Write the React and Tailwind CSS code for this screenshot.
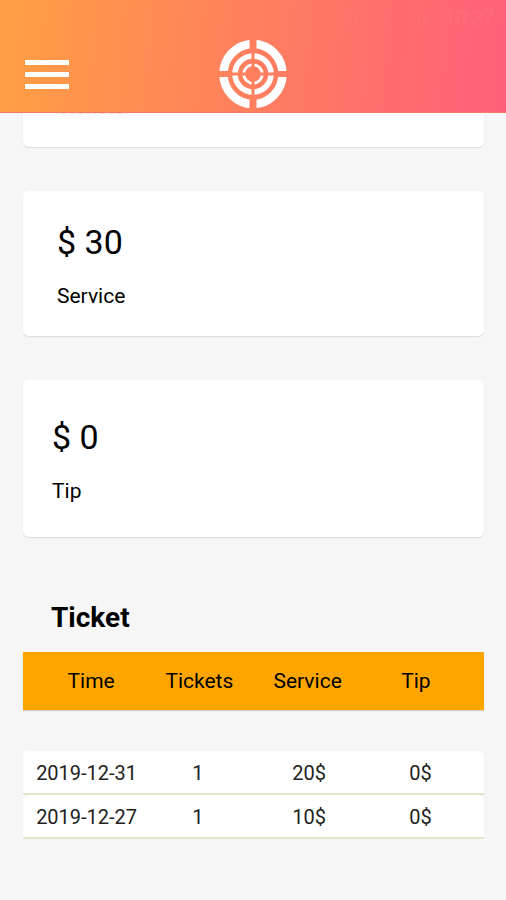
import React from 'react';
import { AlarmClock, Signal, Wifi } from 'lucide-react';

const tickets = [
  { time: '2019-12-31', tickets: 1, service: 20, tip: 0 },
  { time: '2019-12-27', tickets: 1, service: 10, tip: 0 },
];

const columns = ['Time', 'Tickets', 'Service', 'Tip'];

const TargetLogo = () => (
  <svg viewBox="0 0 68 70" className="w-[68px] h-[70px]" fill="none" stroke="#fff" aria-hidden="true">
    <defs>
      <mask id="cross" maskUnits="userSpaceOnUse" x="0" y="0" width="68" height="70">
        <rect width="68" height="70" fill="#fff" stroke="none" />
        <path d="M34 0V13M34 57V70" stroke="#000" strokeWidth="7" />
        <path d="M0 35H12M56 35H68" stroke="#000" strokeWidth="6" />
        <path d="M34 13V57M12 35H56" stroke="#000" strokeWidth="3" />
      </mask>
    </defs>
    <g mask="url(#cross)">
      <ellipse cx="34" cy="35" rx="29.5" ry="30" strokeWidth="8.5" />
      <circle cx="34" cy="35" r="18" strokeWidth="5.5" />
      <circle cx="34" cy="35" r="9.25" strokeWidth="2.75" />
    </g>
  </svg>
);

const StatusBar = () => (
  <div className="flex h-9 items-center justify-end gap-4 px-3 text-[#ff8580] opacity-25">
    <AlarmClock size={18} />
    <Wifi size={18} />
    <Signal size={18} />
    <span className="text-xl">10:27</span>
  </div>
);

const Header = () => (
  <header className="sticky top-0 z-10 h-[113px] border-b border-[#f07a60] bg-[linear-gradient(95deg,#ff9f43,#ff5f7a)]">
    <StatusBar />
    <div className="grid grid-cols-3 items-center px-6 pt-[3px]">
      <button type="button" aria-label="Menu" className="flex w-[46px] flex-col gap-[7px] px-px">
        <span className="h-[5px] bg-white" />
        <span className="h-[5px] bg-white" />
        <span className="h-[5px] bg-white" />
      </button>
      <div className="flex justify-center">
        <TargetLogo />
      </div>
    </div>
  </header>
);

const StatCard = ({ value, label, className = 'pt-[31px] pb-7 px-[34px]', labelColor = 'text-black' }) => (
  <section className={`rounded-md bg-white shadow-[0_1px_1px_#dcdcdc] ${className}`}>
    <p className="text-[34px] leading-10">{value}</p>
    <p className={`mt-[22px] text-[21px] leading-6 ${labelColor}`}>{label}</p>
  </section>
);

const TicketTable = () => (
  <table className="block w-full text-center text-xl leading-6">
    <thead className="block bg-[#ffa500] px-3.5 shadow-[0_1px_1px_#cfcfcf]">
      <tr className="grid grid-cols-4 py-[17px] text-[21px]">
        {columns.map((column) => (
          <th key={column} scope="col" className="font-normal">{column}</th>
        ))}
      </tr>
    </thead>
    <tbody className="mt-[41px] block">
      {tickets.map((row) => (
        <tr key={row.time} className="grid h-11 grid-cols-4 items-center rounded-t-md border-b-2 border-[#e6e6c6] bg-white px-2 pt-0.5 text-[#222]">
          <td className="whitespace-nowrap">{row.time}</td>
          <td>{row.tickets}</td>
          <td>{row.service}$</td>
          <td>{row.tip}$</td>
        </tr>
      ))}
    </tbody>
  </table>
);

const App = () => (
  <div className="min-h-screen bg-[#f6f6f6] font-[Roboto,sans-serif] text-black">
    <Header />
    <main className="-mt-[111px] pr-[22px] pl-[23px] pb-15">
      <div className="flex flex-col gap-11">
        <StatCard value="2" label="Tickets" labelColor="text-[#ffd9cc]" />
        <StatCard value="$ 30" label="Service" />
        <StatCard value="$ 0" label="Tip" className="pt-[37px] pb-[34px] px-[29px]" />
      </div>
      <h2 className="mt-[65px] mb-[18px] px-7 text-[28px] leading-8 font-bold">Ticket</h2>
      <TicketTable />
    </main>
  </div>
);

export default App;
